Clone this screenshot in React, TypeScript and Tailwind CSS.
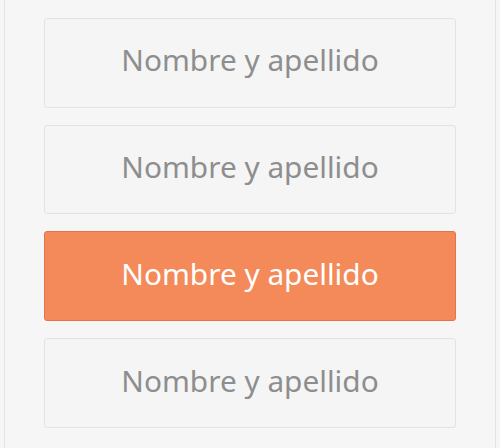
export default function App() {
  const items = [
    { label: "Nombre y apellido", active: false },
    { label: "Nombre y apellido", active: false },
    { label: "Nombre y apellido", active: true },
    { label: "Nombre y apellido", active: false },
  ];

  return (
    <div className="w-[500px] h-[448px] bg-[#f6f6f6] px-1" style={{ fontFamily: '"Noto Sans", sans-serif' }}>
      <div className="h-full border-x border-[#e4e4e4] px-[39px] pt-[18px] flex flex-col gap-[17px]">
        {items.map((it, i) => (
          <button
            key={i}
            className={`h-[89.7px] w-full rounded-[3px] border flex items-center justify-center text-[29.8px] leading-none pb-[5px] ${
              it.active
                ? "bg-[#f48a5a] border-[#e67449] text-white"
                : "bg-[#f5f5f5] border-[#e2e2e2] text-[#8e8e8e]"
            }`}
          >
            {it.label}
          </button>
        ))}
      </div>
    </div>
  );
}
